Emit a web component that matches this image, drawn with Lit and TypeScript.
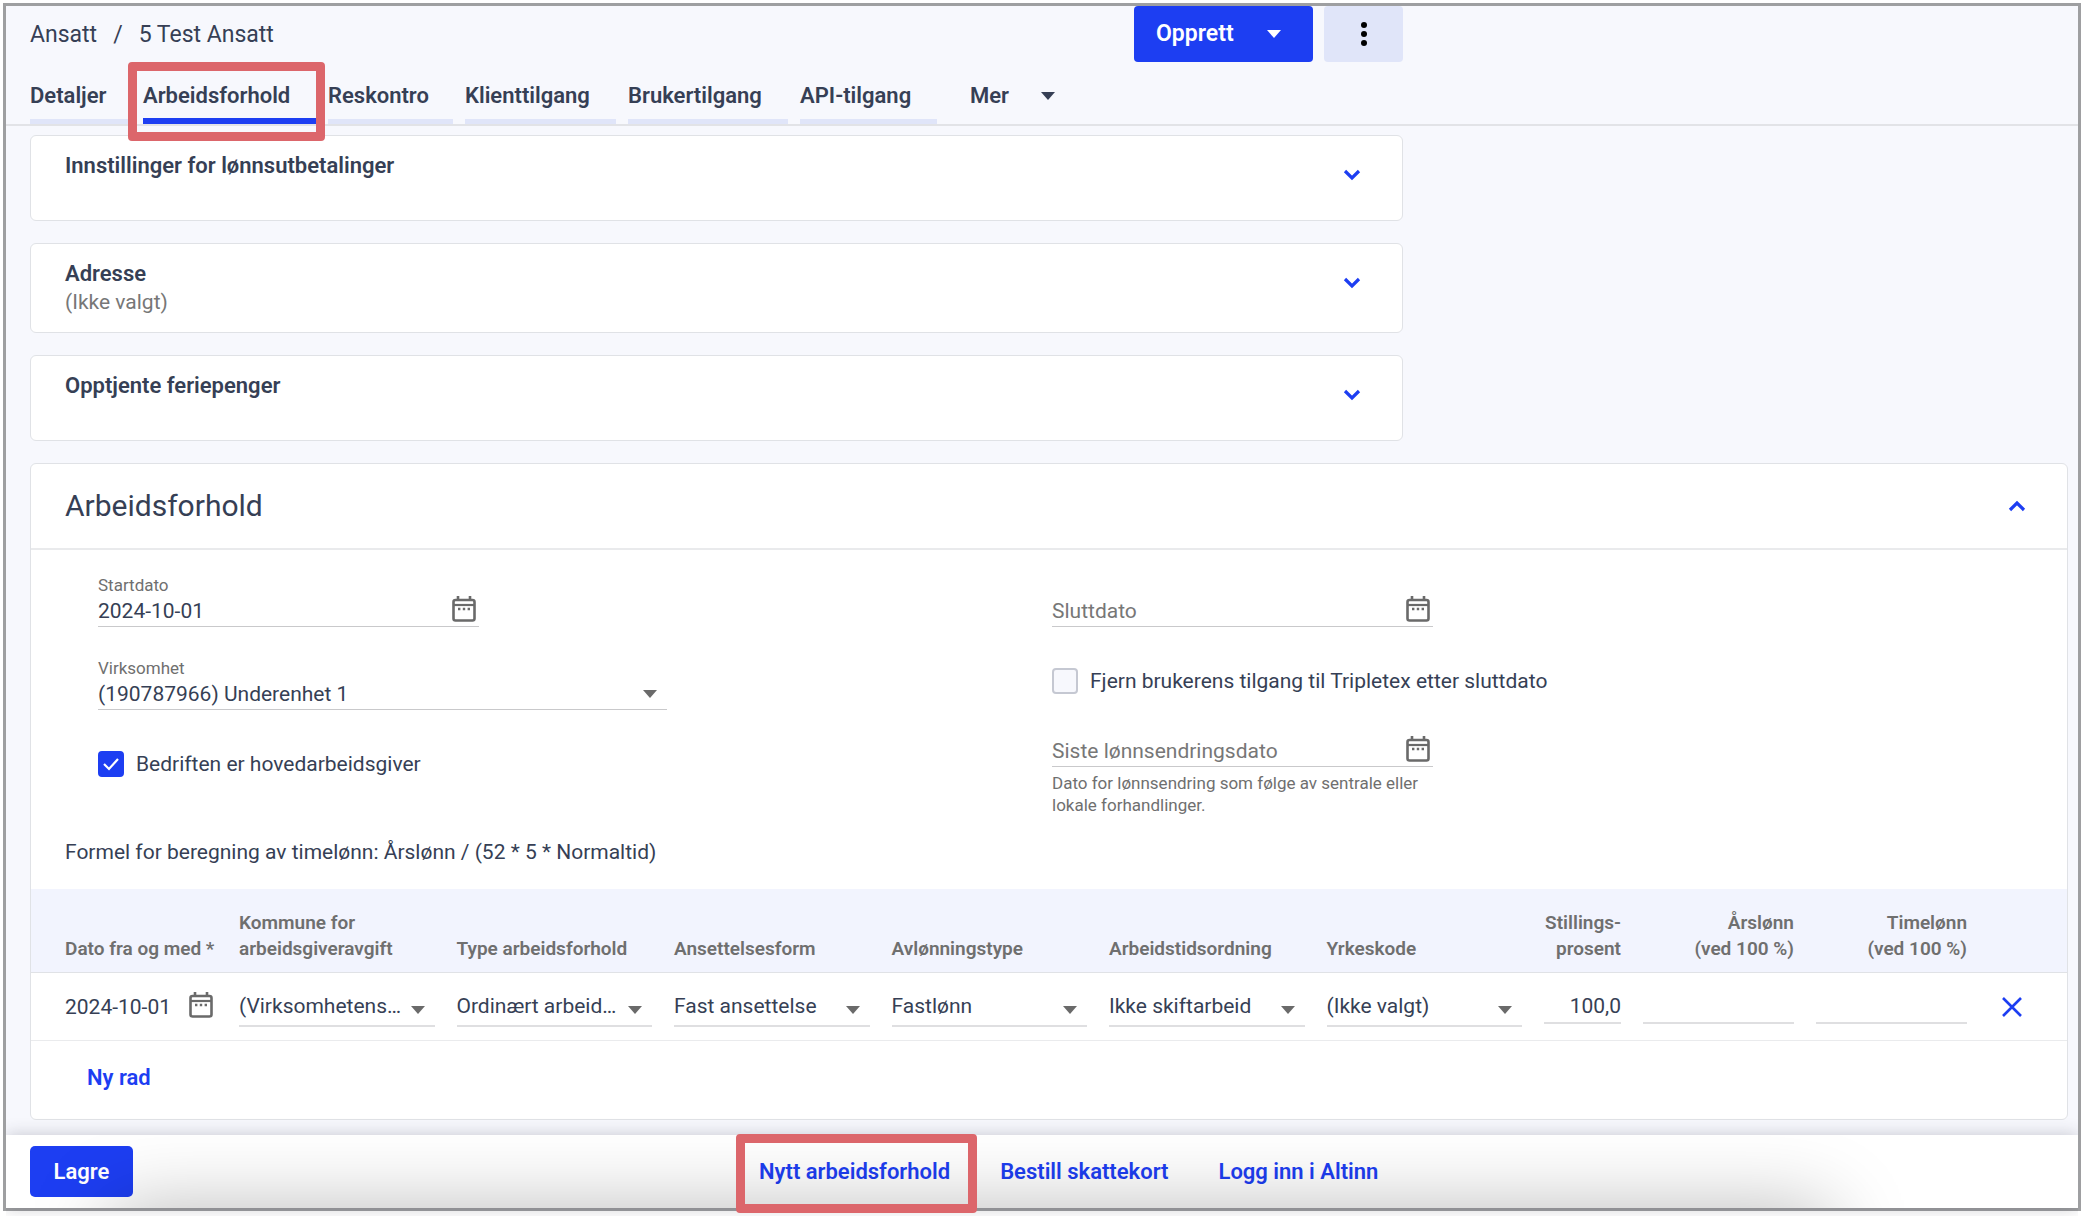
import { LitElement, html, svg, css, nothing } from "lit";
import { customElement } from "lit/decorators.js";
import { classMap } from "lit/directives/class-map.js";

const tabs = ["Detaljer", "Arbeidsforhold", "Reskontro", "Klienttilgang", "Brukertilgang", "API-tilgang"];

const cards = [
  { title: "Innstillinger for lønnsutbetalinger", note: "" },
  { title: "Adresse", note: "(Ikke valgt)" },
  { title: "Opptjente feriepenger", note: "" },
];

const selectColumns = [
  { head: ["Kommune for", "arbeidsgiveravgift"], value: "(Virksomhetens…" },
  { head: ["Type arbeidsforhold"], value: "Ordinært arbeid…" },
  { head: ["Ansettelsesform"], value: "Fast ansettelse" },
  { head: ["Avlønningstype"], value: "Fastlønn" },
  { head: ["Arbeidstidsordning"], value: "Ikke skiftarbeid" },
  { head: ["Yrkeskode"], value: "(Ikke valgt)" },
];

const numberColumns = [
  { head: ["Stillings-", "prosent"], value: "100,0", width: "narrow" },
  { head: ["Årslønn", "(ved 100 %)"], value: "", width: "wide" },
  { head: ["Timelønn", "(ved 100 %)"], value: "", width: "wide" },
];

const caret = html`<svg class="caret" width="14" height="8" viewBox="0 0 14 8" aria-hidden="true">
  <path d="M0 0h14L7 8z" fill="currentColor" />
</svg>`;

const chevron = (up = false) => html`<svg class="chevron" width="18" height="12" viewBox="0 0 18 12" aria-hidden="true">
  ${up
    ? svg`<path d="M2 10l7-7 7 7" fill="none" stroke="currentColor" stroke-width="3.2" />`
    : svg`<path d="M2 2l7 7 7-7" fill="none" stroke="currentColor" stroke-width="3.2" />`}
</svg>`;

const calendar = html`<svg class="calendar" width="24" height="26" viewBox="0 0 24 26" aria-hidden="true">
  <rect x="1.5" y="4" width="21" height="20.5" rx="2" fill="none" stroke="currentColor" stroke-width="2.6" />
  <path d="M6 0v4M18 0v4" stroke="currentColor" stroke-width="2.6" />
  <path d="M2 9h20" stroke="currentColor" stroke-width="2.2" />
  <path d="M6 13h2.4M10.8 13h2.4M15.6 13h2.4" stroke="currentColor" stroke-width="2.4" />
</svg>`;

const lines = (parts: string[]) => parts.map((p, i) => html`${i ? html`<br />` : nothing}${p}`);

@customElement("app-root")
export class AppRoot extends LitElement {
  static styles = css`
    :host {
      display: block;
      box-sizing: border-box;
      min-height: 100vh;
      padding: 3px 5px 5px 3px;
      background: #fff;
      color: #363f55;
      font-family: Roboto, "Liberation Sans", sans-serif;
      font-size: 21px;
      line-height: 28px;
      --blue: #1d3ef2;
      --pale: #e0e5f9;
      --line: #e0e2e6;
      --gray: #6f6f6f;
      --mark: #dc666b;
    }
    * {
      box-sizing: border-box;
    }
    button,
    input,
    select {
      font: inherit;
      color: inherit;
      margin: 0;
      padding: 0;
      border: 0;
      border-radius: 0;
      background: none;
      appearance: none;
      outline: none;
      min-width: 0;
    }
    svg {
      display: block;
      flex: none;
    }
    .frame {
      display: flex;
      flex-direction: column;
      min-height: calc(100vh - 8px);
      border: 3px solid #9e9fa1;
      background: #f7f8fd;
    }
    .header {
      padding-left: 24px;
      border-bottom: 2px solid #e2e3e7;
    }
    .top {
      display: flex;
      align-items: center;
      gap: 11px;
      max-width: 1373px;
      height: 56px;
    }
    .crumbs {
      display: flex;
      gap: 16px;
      flex: 1;
      padding-top: 2px;
      font-size: 23px;
    }
    .crumbs a {
      color: inherit;
      text-decoration: none;
    }
    .create {
      display: flex;
      align-items: center;
      justify-content: space-between;
      width: 179px;
      height: 56px;
      padding: 0 32px 0 22px;
      border-radius: 4px;
      background: var(--blue);
      color: #fff;
      font-size: 23px;
      font-weight: 600;
    }
    .more {
      display: grid;
      place-items: center;
      width: 79px;
      height: 56px;
      border-radius: 4px;
      background: var(--pale);
      color: #000;
    }
    .tabs {
      display: grid;
      grid-template-columns: 101px 173px 125px 151px 160px 137px auto;
      justify-content: start;
      column-gap: 12px;
      height: 62px;
      font-size: 22px;
      font-weight: 600;
    }
    .tab {
      position: relative;
      padding-top: 20px;
      border-bottom: 5px solid var(--pale);
      color: inherit;
      text-decoration: none;
      white-space: nowrap;
    }
    .tab.active {
      border-bottom: 6px solid var(--blue);
    }
    .tab-more {
      display: flex;
      align-items: center;
      gap: 32px;
      height: 28px;
      margin: 20px 0 0 21px;
    }
    .mark {
      position: absolute;
      border: 9px solid var(--mark);
      border-radius: 4px;
      pointer-events: none;
    }
    .tab .mark {
      inset: 0 -9px -23px -15px;
    }
    .content {
      display: flex;
      flex-direction: column;
      gap: 22px;
      padding: 9px 10px 15px 24px;
    }
    .card {
      border: 1px solid var(--line);
      border-radius: 6px;
      background: #fff;
    }
    .fold {
      display: flex;
      align-items: flex-start;
      justify-content: space-between;
      max-width: 1373px;
      min-height: 86px;
      padding: 16px 41px 16px 34px;
      text-align: left;
    }
    .fold .title {
      display: block;
      font-size: 22px;
      font-weight: 600;
    }
    .fold .note {
      display: block;
      color: #777;
    }
    .chevron {
      color: var(--blue);
    }
    .fold .chevron {
      margin-top: 17px;
    }
    .section-head {
      display: flex;
      align-items: center;
      justify-content: space-between;
      width: 100%;
      height: 86px;
      padding: 0 41px 0 34px;
      border-bottom: 2px solid #e9eaec;
    }
    h2 {
      margin: 0;
      font-size: 30px;
      font-weight: 400;
      line-height: 36px;
    }
    .form {
      display: grid;
      grid-template-columns: 1fr 1fr;
      padding: 24px 61px 0 67px;
    }
    .column {
      display: flex;
      flex-direction: column;
      align-items: flex-start;
    }
    .column.right {
      padding-top: 22px;
    }
    .field {
      width: 381px;
    }
    .field.wide {
      width: 569px;
      margin-top: 30px;
    }
    .field label,
    .help {
      display: block;
      color: var(--gray);
      font-size: 17px;
      line-height: 22px;
    }
    .help {
      margin: 5px 0 0;
    }
    .control {
      display: flex;
      align-items: center;
      height: 31px;
      border-bottom: 1px solid #c9c9cb;
    }
    .control input,
    .control select {
      flex: 1;
      height: 30px;
    }
    input::placeholder {
      color: #777;
      opacity: 1;
    }
    .control .date-button {
      margin: 0 3px 4px 0;
    }
    .control .caret {
      margin-right: 10px;
    }
    .caret,
    .calendar {
      pointer-events: none;
    }
    .control .caret,
    .calendar,
    .cell .caret {
      color: #6a6a6a;
    }
    .check {
      display: flex;
      align-items: center;
      gap: 12px;
      margin-top: 41px;
      height: 26px;
    }
    .box {
      display: grid;
      place-items: center;
      width: 26px;
      height: 26px;
      color: #fff;
    }
    .box > * {
      grid-area: 1 / 1;
    }
    .box input {
      width: 26px;
      height: 26px;
      border: 2px solid #c5c8d2;
      border-radius: 4px;
      background: #f7f8fd;
    }
    .box input:checked {
      border-color: var(--blue);
      background: var(--blue);
    }
    .box svg {
      pointer-events: none;
    }
    .spaced {
      margin-top: 42px;
    }
    .formula {
      margin: 0;
      padding: 22px 34px 23px;
    }
    table {
      width: 100%;
      table-layout: fixed;
      border-collapse: collapse;
    }
    .col-date {
      width: 197px;
    }
    .col-narrow {
      width: 99px;
    }
    .col-wide {
      width: 173px;
    }
    .col-remove {
      width: 89px;
    }
    th {
      padding: 21px 11px 10px;
      background: #f2f4fe;
      color: var(--gray);
      font-size: 19px;
      font-weight: 600;
      line-height: 26px;
      text-align: left;
      vertical-align: bottom;
      white-space: nowrap;
      border-bottom: 1px solid var(--line);
    }
    td {
      height: 68px;
      padding: 0 11px;
      border-bottom: 1px solid #eaebed;
    }
    th:first-child,
    td:first-child {
      padding: 0 11px 0 34px;
    }
    th:first-child {
      padding-bottom: 10px;
    }
    .number {
      text-align: right;
    }
    .cell {
      display: flex;
      align-items: center;
    }
    .cell select,
    .cell input {
      flex: 1;
      width: 0;
    }
    .cell.pick {
      height: 41px;
      border-bottom: 2px solid #dfdfe1;
    }
    .cell.pick select {
      height: 39px;
    }
    .cell.pick .caret {
      margin: 8px 10px 0 0;
    }
    .cell.amount {
      height: 35px;
      border-bottom: 2px solid #dfdfe1;
    }
    .cell.amount input {
      height: 33px;
      text-align: right;
    }
    .cell.date .date-button {
      margin: 0 4px 4px 0;
    }
    .remove {
      display: block;
      margin-left: 13px;
      color: var(--blue);
    }
    .add-row {
      display: flex;
      align-items: center;
      height: 78px;
      padding: 0 56px 4px;
    }
    .text-button {
      color: var(--blue);
      font-size: 22px;
      font-weight: 600;
      text-decoration: none;
      white-space: nowrap;
    }
    .footer {
      position: relative;
      display: grid;
      grid-template-columns: 729fr 1309fr;
      align-items: center;
      height: 73px;
      margin-top: auto;
      padding: 0 10px 0 24px;
      background: #fff;
      box-shadow: 0 0 16px rgba(40, 40, 60, 0.24);
      clip-path: inset(-20px 0 -20px 0);
    }
    .shade {
      position: absolute;
      inset: 0;
      overflow: hidden;
      pointer-events: none;
    }
    .shade::before {
      content: "";
      position: absolute;
      top: 100%;
      left: 5%;
      right: 12%;
      height: 100px;
      box-shadow: 0 0 80px rgba(0, 0, 0, 0.27);
    }
    .save {
      width: 103px;
      height: 51px;
      border-radius: 5px;
      background: var(--blue);
      color: #fff;
      font-size: 22px;
      font-weight: 600;
    }
    .links {
      display: flex;
      gap: 50px;
    }
    .links .text-button {
      position: relative;
    }
    .links .mark {
      z-index: 1;
      inset: -24px -27px -27px -23px;
    }
  `;

  private dateButton(label: string) {
    return html`<button class="date-button" type="button" aria-label=${label}>${calendar}</button>`;
  }

  private emptyDate(id: string, label: string) {
    return html`<div class="control">
      <input id=${id} type="text" placeholder=${label} aria-label=${label} />${this.dateButton(label)}
    </div>`;
  }

  render() {
    return html`
      <div class="frame">
        <header class="header">
          <div class="top">
            <nav class="crumbs"><a href="#ansatt">Ansatt</a><span>/</span><span>5 Test Ansatt</span></nav>
            <button class="create" type="button">Opprett ${caret}</button>
            <button class="more" type="button" aria-label="Mer">
              <svg width="8" height="26" viewBox="0 0 8 26" fill="currentColor">
                <circle cx="4" cy="4" r="3" />
                <circle cx="4" cy="13" r="3" />
                <circle cx="4" cy="22" r="3" />
              </svg>
            </button>
          </div>
          <nav class="tabs">
            ${tabs.map((name) => {
              const active = name === "Arbeidsforhold";
              return html`<a class=${classMap({ tab: true, active })} href="#${name}"
                >${name}${active ? html`<span class="mark"></span>` : nothing}</a
              >`;
            })}
            <button class="tab-more" type="button">Mer ${caret}</button>
          </nav>
        </header>

        <main class="content">
          ${cards.map(
            (card) => html`<button class="card fold" type="button" aria-expanded="false">
              <span>
                <span class="title">${card.title}</span>
                ${card.note ? html`<span class="note">${card.note}</span>` : nothing}
              </span>
              ${chevron()}
            </button>`
          )}

          <section class="card">
            <button class="section-head" type="button" aria-expanded="true">
              <h2>Arbeidsforhold</h2>
              ${chevron(true)}
            </button>
            <div class="form">
              <div class="column">
                <div class="field">
                  <label for="start">Startdato</label>
                  <div class="control">
                    <input id="start" type="text" .value=${"2024-10-01"} />${this.dateButton("Startdato")}
                  </div>
                </div>
                <div class="field wide">
                  <label for="company">Virksomhet</label>
                  <div class="control">
                    <select id="company">
                      <option>(190787966) Underenhet 1</option>
                    </select>
                    ${caret}
                  </div>
                </div>
                <label class="check">
                  <span class="box">
                    <input type="checkbox" checked />
                    <svg width="18" height="14" viewBox="0 0 18 14">
                      <path d="M2 7l5 5L16 2" fill="none" stroke="currentColor" stroke-width="2.2" />
                    </svg>
                  </span>
                  Bedriften er hovedarbeidsgiver
                </label>
              </div>
              <div class="column right">
                <div class="field">${this.emptyDate("end", "Sluttdato")}</div>
                <label class="check">
                  <span class="box"><input type="checkbox" /></span>
                  Fjern brukerens tilgang til Tripletex etter sluttdato
                </label>
                <div class="field spaced">
                  ${this.emptyDate("last-change", "Siste lønnsendringsdato")}
                  <p class="help">Dato for lønnsendring som følge av sentrale eller lokale forhandlinger.</p>
                </div>
              </div>
            </div>
            <p class="formula">Formel for beregning av timelønn: Årslønn / (52 * 5 * Normaltid)</p>

            <table>
              <colgroup>
                <col class="col-date" />
                ${selectColumns.map(() => html`<col />`)}
                ${numberColumns.map((c) => html`<col class="col-${c.width}" />`)}
                <col class="col-remove" />
              </colgroup>
              <thead>
                <tr>
                  <th>Dato fra og med *</th>
                  ${selectColumns.map((c) => html`<th>${lines(c.head)}</th>`)}
                  ${numberColumns.map((c) => html`<th class="number">${lines(c.head)}</th>`)}
                  <th></th>
                </tr>
              </thead>
              <tbody>
                <tr>
                  <td>
                    <div class="cell date">
                      <input type="text" aria-label="Dato fra og med" .value=${"2024-10-01"} />
                      ${this.dateButton("Dato fra og med")}
                    </div>
                  </td>
                  ${selectColumns.map(
                    (c) => html`<td>
                      <div class="cell pick">
                        <select aria-label=${c.head.join(" ")}>
                          <option>${c.value}</option>
                        </select>
                        ${caret}
                      </div>
                    </td>`
                  )}
                  ${numberColumns.map(
                    (c) => html`<td>
                      <div class="cell amount">
                        <input type="text" aria-label=${c.head.join(" ")} .value=${c.value} />
                      </div>
                    </td>`
                  )}
                  <td>
                    <button class="remove" type="button" aria-label="Slett rad">
                      <svg width="20" height="20" viewBox="0 0 20 20">
                        <path d="M1 1l18 18M19 1L1 19" stroke="currentColor" stroke-width="2.6" />
                      </svg>
                    </button>
                  </td>
                </tr>
              </tbody>
            </table>
            <div class="add-row"><button class="text-button" type="button">Ny rad</button></div>
          </section>
        </main>

        <footer class="footer">
          <button class="save" type="button">Lagre</button>
          <nav class="links">
            <a class="text-button" href="#nytt">Nytt arbeidsforhold<span class="mark"></span></a>
            <a class="text-button" href="#skattekort">Bestill skattekort</a>
            <a class="text-button" href="#altinn">Logg inn i Altinn</a>
          </nav>
          <div class="shade"></div>
        </footer>
      </div>
    `;
  }
}
